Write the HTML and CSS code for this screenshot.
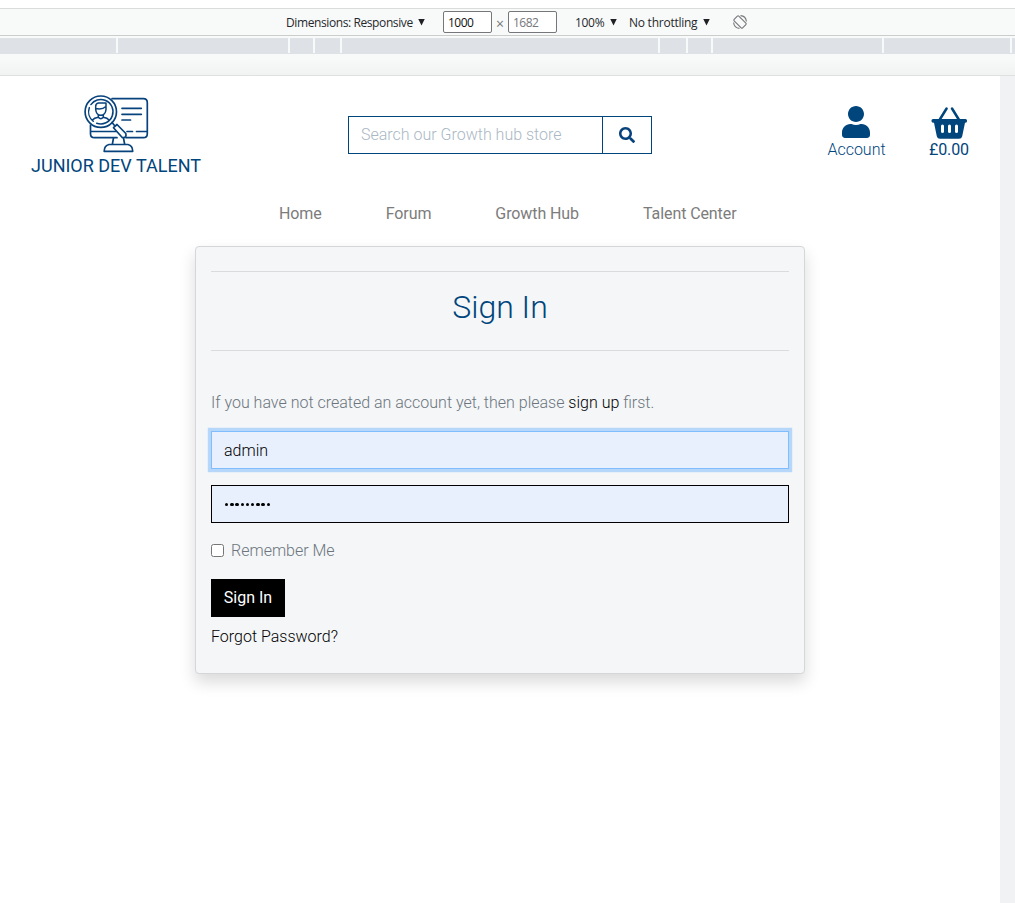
FILE: index.html
```html
<!DOCTYPE html>
<html lang="en">
<head>
<meta charset="utf-8">
<title>Sign In</title>
<link rel="stylesheet" href="styles.css">
</head>
<body>
<div class="device-bar">
  <span class="dimensions">Dimensions: Responsive</span><span class="caret"></span>
  <span class="size-box size-width">1000</span>
  <span class="times">×</span>
  <span class="size-box size-height">1682</span>
  <span class="zoom">100%</span><span class="caret"></span>
  <span class="throttle">No throttling</span><span class="caret"></span>
  <svg class="rotate" width="16" height="16" viewBox="0 0 16 16" fill="none" stroke="#75777a" stroke-width="1.1"><rect x="4.7" y="2" width="6.6" height="12" rx="1" transform="rotate(-45 8 8)"/><path d="M8.5 1.6A6.5 6.5 0 0 1 14.4 7.5M7.5 14.4A6.5 6.5 0 0 1 1.6 8.5"/></svg>
</div>
<div class="ruler"><i></i><i></i><i></i><i></i><i></i><i></i><i></i><i></i><i></i><i></i></div>
<div class="shade"></div>
<div class="viewport">
  <div class="page">
    <header class="header">
      <div class="brand">
        <svg width="66" height="60" viewBox="0 0 66 60" fill="none" stroke="#07427c" stroke-width="1.7" stroke-linecap="round" stroke-linejoin="round">
          <path d="M29 4.700H60.300Q64.300 4.700 64.300 8.700V39.700Q64.300 43.700 60.300 43.700H43M34 43.700H11.500Q7.500 43.700 7.500 39.700V31M7.500 37.500H33M44 37.500H49.500M53.500 37.500H64"/>
          <path d="M30.500 44L29.300 50.500M40.500 44L41.700 50.500M26 50.500H45Q49.700 51.500 49.700 57.300H21.200Q21.200 51.500 26 50.500Z"/>
          <circle cx="17.800" cy="17.700" r="15.700"/>
          <circle cx="17.800" cy="17.700" r="12.200" stroke-width="1.500" stroke-dasharray="38 4 15 3.500 16.150 0" transform="rotate(-70 17.800 17.700)"/>
          <path stroke-width="1.500" d="M12.700 12.500Q12.500 9.500 15.500 9H23V15.500Q22.500 21 17.800 21.300Q13.200 21 12.700 15.500ZM12.700 14.500Q19 16 23 12.500M15.300 21V23.300Q17.800 26 20.300 23.300V21M9.500 26Q11 24 15.300 23.300M20.300 23.300Q24.500 24 26 26"/>
          <path d="M29 28.500L31.500 31.500"/>
          <path fill="#fff" d="M30.500 33.700L34 30.500L42.800 39.500Q44 44.500 39 43.300Z"/>
          <path d="M39 14.300H58.300M39 20.300H58.300M39 26H47.500"/>
        </svg>
        <span class="brand-name">JUNIOR DEV TALENT</span>
      </div>
      <div class="search">
        <span class="search-input">Search our Growth hub store</span>
        <span class="search-button"><svg width="16" height="16" viewBox="0 0 512 512" fill="#07427c"><path d="M505 442.700L405.300 343c-4.500-4.500-10.600-7-17-7H372c27.600-35.300 44-79.700 44-128C416 93.100 322.900 0 208 0S0 93.100 0 208s93.100 208 208 208c48.300 0 92.700-16.400 128-44v16.300c0 6.400 2.500 12.500 7 17l99.700 99.700c9.400 9.400 24.600 9.400 33.900 0l28.300-28.300c9.400-9.400 9.400-24.600.1-34zM208 336c-70.700 0-128-57.200-128-128 0-70.700 57.200-128 128-128 70.700 0 128 57.200 128 128 0 70.700-57.200 128-128 128z"/></svg></span>
      </div>
      <div class="account">
        <svg width="28" height="32" viewBox="0 0 448 512" fill="#00457c"><path d="M224 256c70.700 0 128-57.300 128-128S294.700 0 224 0 96 57.300 96 128s57.300 128 128 128zm89.600 32h-16.700c-22.200 10.200-46.900 16-72.900 16s-50.600-5.800-72.900-16h-16.700C60.200 288 0 348.200 0 422.400V464c0 26.500 21.500 48 48 48h352c26.500 0 48-21.500 48-48v-41.600c0-74.200-60.200-134.400-134.400-134.400z"/></svg>
        <span>Account</span>
      </div>
      <div class="basket">
        <svg width="36" height="33" viewBox="0 0 36 33" fill="#00457c">
          <path d="M8.800 13.500L15.600 2.500M27.800 13.500L21 2.500" fill="none" stroke="#00457c" stroke-width="2.500" stroke-linecap="round"/>
          <path fill-rule="evenodd" d="M2 13H34.500Q36 13 36 14.500V15.300Q36 16.800 34 16.800L31.200 30.200Q30.600 32.800 28 32.800H9Q6.400 32.800 5.800 30.200L3 16.800Q.5 16.800 .5 15.300V14.500Q.5 13 2 13ZM11.500 18.500Q10 18.500 10 20V25.500Q10 27 11.500 27T13 25.500V20Q13 18.500 11.500 18.500ZM18.500 18.500Q17 18.500 17 20V25.500Q17 27 18.500 27T20 25.500V20Q20 18.500 18.500 18.500ZM25.500 18.500Q24 18.500 24 20V25.500Q24 27 25.500 27T27 25.500V20Q27 18.500 25.500 18.500Z"/>
        </svg>
        <span>£0.00</span>
      </div>
    </header>
    <nav class="nav"><a>Home</a><a>Forum</a><a>Growth Hub</a><a>Talent Center</a></nav>
    <main class="card">
      <h1 class="title">Sign In</h1>
      <p class="intro">If you have not created an account yet, then please <a class="link">sign up</a> first.</p>
      <div class="field focused">admin</div>
      <div class="field password"><i></i><i></i><i></i><i></i><i></i><i></i><i></i><i></i><i></i></div>
      <label class="remember"><span class="checkbox"></span>Remember Me</label>
      <button class="submit">Sign In</button>
      <a class="link forgot">Forgot Password?</a>
    </main>
  </div>
</div>
</body>
</html>
```
FILE: styles.css
```css
* { box-sizing: border-box; }
body {
  margin: 0;
  padding-top: 8px;
  height: 903px;
  overflow: hidden;
  background: #fff;
  font: 300 16px/24px Roboto, sans-serif;
  color: #6c757d;
}
.device-bar {
  height: 28px;
  padding-left: 286px;
  display: flex;
  align-items: center;
  background: #f8faf9;
  border-top: 1px solid #dadcdc;
  border-bottom: 1px solid #cacdcc;
  font: 400 12px/22px "Open Sans", sans-serif;
  color: #26282c;
  white-space: nowrap;
}
.dimensions { width: 132px; padding-top: 1px; letter-spacing: -0.4px; }
.caret {
  width: 7px;
  height: 7px;
  background: #202124;
  clip-path: polygon(0 0, 100% 0, 50% 100%);
}
.size-box {
  width: 49px;
  height: 22px;
  padding-left: 4px;
  border: 1px solid #75777a;
  border-radius: 2px;
  background: #fff;
  letter-spacing: -0.5px;
}
.size-width { margin-left: 18px; color: #111; }
.times { width: 16px; text-align: center; color: #75777a; padding-top: 4px; font-size: 14px; }
.size-height { color: #75777a; }
.zoom { margin-left: 18px; width: 35px; padding-top: 1px; letter-spacing: -0.3px; }
.throttle { margin-left: 12px; width: 74px; padding-top: 1px; letter-spacing: -0.25px; }
.rotate { margin-left: 22px; }
.ruler {
  height: 18px;
  padding-top: 2px;
  display: grid;
  grid-template-columns: 116px 170px 23px 25px 316px 26px 23px 169px 126px 3px;
  gap: 2px;
  background: linear-gradient(#f8faf9 17px, #dee1e5 17px);
}
.ruler i { background: #dee1e6; }
.shade {
  height: 22px;
  background: linear-gradient(#f8faf9 20%, #f1f2f2);
  border-bottom: 1px solid #dfe0e0;
}
.viewport { height: 827px; background: #f1f2f4; }
.page { width: 1000px; height: 827px; background: #fff; }
.header {
  height: 118px;
  display: grid;
  grid-template-columns: 232px 536px 177px 8px;
  color: #00457c;
}
.brand { display: flex; flex-direction: column; align-items: center; padding-top: 18px; }
.brand-name { font-size: 18px; font-weight: 400; line-height: 24px; white-space: nowrap; }
.search {
  justify-self: center;
  margin-top: 40px;
  width: 304px;
  height: 38px;
  display: flex;
  border: 1px solid #00457c;
}
.search-input { flex: 1; padding: 6px 12px; color: #aab7c4; }
.search-button {
  width: 49px;
  border-left: 1px solid #00457c;
  display: grid;
  place-items: center;
}
.account, .basket { display: flex; flex-direction: column; align-items: center; padding-top: 30px; }
.account svg { margin-right: 1px; }
.basket svg { margin-bottom: -1px; }
.basket { width: 8px; font-weight: 400; letter-spacing: -0.1px; }
.nav {
  height: 52px;
  padding: 8px 0 0 279px;
  display: flex;
  gap: 64px;
  color: #7c7c7c;
  font-weight: 400;
  letter-spacing: -0.09px;
}
.card {
  width: 610px;
  height: 428px;
  margin: 0 auto;
  padding: 24px 15px 0;
  display: flex;
  flex-direction: column;
  align-items: flex-start;
  background: #f4f6f8;
  border: 1px solid #d4d6d8;
  border-radius: 4px;
  box-shadow: 0 8px 16px rgba(0, 0, 0, 0.15);
}
.title {
  width: 100%;
  height: 80px;
  margin: 0 0 40px;
  padding-top: 16px;
  border-top: 1px solid #d9dbdc;
  border-bottom: 1px solid #d9dbdc;
  text-align: center;
  font-size: 32px;
  font-weight: 300;
  line-height: 38px;
  color: #00457c;
}
.intro { margin: 0 0 16px; }
.link { color: #000; }
.field {
  width: 100%;
  height: 38px;
  margin-bottom: 16px;
  padding: 7px 12px 5px;
  border: 1px solid #000;
  background: #e8f0fe;
  color: #000;
}
.focused { border-color: #80bdff; box-shadow: 0 0 0 3.2px rgba(0, 123, 255, 0.25); }
.password { display: flex; align-items: center; gap: 1.8px; padding: 1px 13px 0; }
.password i { width: 3.4px; height: 3.4px; border-radius: 50%; background: #000; }
.remember { display: flex; align-items: center; margin-bottom: 16px; }
.checkbox {
  width: 13px;
  height: 13px;
  margin: 0 7px 1px 0;
  border: 1px solid #767676;
  border-radius: 2.5px;
  background: #fff;
}
.submit {
  width: 74px;
  height: 38px;
  padding: 0;
  border: 0;
  background: #000;
  color: #fff;
  font: 400 16px/24px Roboto, sans-serif;
}
.forgot { margin-top: 8px; }
```
